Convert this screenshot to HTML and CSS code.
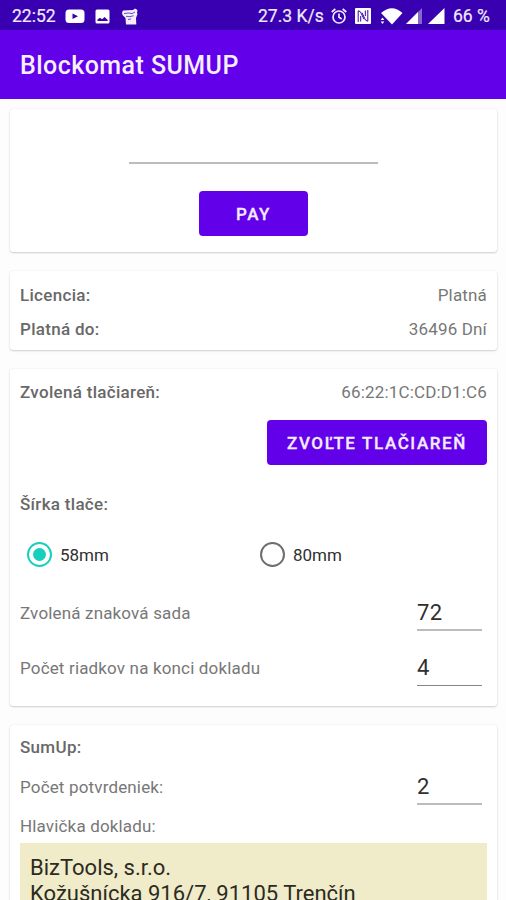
FILE: index.html
```html
<!DOCTYPE html>
<html lang="sk">
<head>
<meta charset="utf-8">
<title>Blockomat SUMUP</title>
<link rel="stylesheet" href="styles.css">
</head>
<body>
<div class="status">
  <span class="clock">22:52</span>
  <svg class="ic-video" width="20" height="15" viewBox="0 0 20 15"><rect x=".5" y=".5" width="19" height="13.5" rx="3.5" fill="#fff"/><path d="M7.5 4.5 13 7.2 7.5 10z" fill="#3800b0"/></svg>
  <svg class="ic-photo" width="15" height="15" viewBox="0 0 15 15"><rect x=".5" y=".5" width="14" height="14" rx="1.5" fill="#fff"/><path d="M2.500 12V10.500L5 8.700l2 1.600L9.700 8l3 3v1z" fill="#3800b0"/></svg>
  <svg class="ic-bin" width="18" height="17" viewBox="0 0 18 17"><path d="M1 4.500 2 2.500l10-.5L14 .5l2.500 1.500-.5 3 .5 1-1.500 4 .3 6.500H5L4.500 10 1.500 7z" fill="#fff" opacity=".93"/><path d="M3 5.500l5-.5 3 .6 3-1.600M5 8.300l4 .4 3.500-1M7 11.500l3-.5" fill="none" stroke="#3800b0" stroke-width=".7"/></svg>
  <span class="speed">27.3 K/s</span>
  <svg class="ic-alarm" width="16" height="17" viewBox="0 0 16 17" fill="none" stroke="#f1eaff" stroke-width="1.700"><circle cx="8" cy="9" r="6"/><path d="M.7 4 4.300 1M15.300 4 11.700 1M8 5.500V9.300l2.700 1.700"/></svg>
  <svg class="ic-nfc" width="16" height="16" viewBox="0 0 16 16"><rect width="16" height="16" rx="1" fill="#fff"/><path d="M3.200 14V2.800q2.300.2 3 2.500l2.800 6M12.800 2v11.200q-2.300-.2-3-2.500l-2.800-6M5.700 8v5.500M10.300 2.500V8" fill="none" stroke="#3800b0" stroke-width="1"/></svg>
  <svg class="ic-wifi" width="23" height="17" viewBox="0 0 23 17"><path d="M1 5Q12-4.500 22.500 5L12 16.500z" fill="#fff"/><path d="M0 9h4.500v8H0z" fill="#3800b0"/><path d="M2.500 9.500 4.300 12H.7zM2.500 16 4.300 13.500H.7z" fill="#fff"/></svg>
  <svg class="ic-sig1" width="17" height="16" viewBox="0 0 17 16"><path d="M0 16 16 0V16z" fill="#fff" opacity=".4"/><path d="M0 16 12 4V16z" fill="#fff"/></svg>
  <svg class="ic-sig2" width="17" height="16" viewBox="0 0 17 16"><path d="M0 16 16.500 0V16z" fill="#fff"/></svg>
  <span class="battery">66 %</span>
</div>
<header class="appbar"><h1>Blockomat SUMUP</h1></header>
<main>
  <section class="card pay-card">
    <div class="amount"></div>
    <button class="btn pay">PAY</button>
  </section>
  <section class="card license">
    <div class="row"><b>Licencia:</b><span>Platná</span></div>
    <div class="row"><b>Platná do:</b><span>36496 Dní</span></div>
  </section>
  <section class="card printer">
    <div class="row"><b>Zvolená tlačiareň:</b><span>66:22:1C:CD:D1:C6</span></div>
    <button class="btn choose">ZVOĽTE TLAČIAREŇ</button>
    <div class="row width-label"><b>Šírka tlače:</b></div>
    <div class="radios">
      <label><i class="radio on"></i><span>58mm</span></label>
      <label><i class="radio"></i><span>80mm</span></label>
    </div>
    <div class="field"><span>Zvolená znaková sada</span><div class="num">72</div></div>
    <div class="field"><span>Počet riadkov na konci dokladu</span><div class="num thin">4</div></div>
  </section>
  <section class="card sumup">
    <div class="row"><b>SumUp:</b></div>
    <div class="field short"><span>Počet potvrdeniek:</span><div class="num">2</div></div>
    <div class="row"><span>Hlavička dokladu:</span></div>
    <div class="header-text"><div>BizTools, s.r.o.</div><div>Kožušnícka 916/7, 91105 Trenčín</div></div>
  </section>
</main>
</body>
</html>
```
FILE: styles.css
```css
* { box-sizing: border-box; }
html, body { height: 900px; overflow: hidden; }
body {
  margin: 0;
  background: #fdfdfd;
  color: #777;
  font: 17px/20px Roboto, sans-serif;
  display: flex;
  flex-direction: column;
}
.status {
  flex: none;
  height: 30px;
  padding: 2px 0 0 12px;
  display: flex;
  align-items: center;
  background: #3800b0;
  color: #f1eaff;
  font-size: 17.500px;
  white-space: nowrap;
  -webkit-text-stroke: .2px #f1eaff;
}
.status svg { flex: none; }
.clock { width: 53px; }
.ic-photo { margin-left: 10px; }
.ic-bin { margin-left: 11px; }
.speed { margin-left: 119px; width: 73px; }
.ic-nfc { margin-left: 8px; }
.ic-wifi { margin-left: 9px; }
.ic-sig1 { margin-left: 3px; }
.ic-sig2 { margin-left: 5px; }
.battery { margin-left: 8px; }
.appbar {
  flex: none;
  height: 69px;
  padding: 3px 20px 0;
  display: flex;
  align-items: center;
  background: #6200ea;
  color: #f6efff;
}
h1 { margin: 0; font-size: 25px; line-height: 30px; font-weight: 500; letter-spacing: .45px; white-space: nowrap; }
main { display: flex; flex-direction: column; gap: 19px; padding: 10px 9px 0 10px; }
.card {
  flex: none;
  padding: 0 10px;
  border-radius: 3px;
  background: #fff;
  box-shadow: 0 1px 2px rgba(0, 0, 0, .17), 0 0 2px rgba(0, 0, 0, .08);
  display: flex;
  flex-direction: column;
}
.pay-card { height: 143px; align-items: center; }
.amount { width: 249px; height: 55px; border-bottom: 2px solid #bcbcbc; }
.btn {
  border: 0;
  padding: 0;
  border-radius: 4px;
  background: #6200ea;
  color: #f4ebff;
  font: 500 17px/20px Roboto, sans-serif;
  letter-spacing: 1.600px;
  -webkit-text-stroke: .3px #f4ebff;
}
.pay { width: 109px; height: 45px; margin-top: 27px; }
.license { height: 79px; padding-top: 7px; }
.row { height: 34px; display: flex; align-items: center; justify-content: space-between; white-space: nowrap; }
.row span, .field > span { letter-spacing: .16px; }
b { font-weight: 500; color: #686868; letter-spacing: .3px; }
.printer { height: 337px; padding-top: 6px; }
.choose { align-self: flex-end; width: 220px; height: 45px; margin-top: 11px; }
.width-label { margin-top: 22px; }
.radios {
  height: 51px;
  margin-top: 8px;
  display: grid;
  grid-template-columns: 233px 1fr;
  padding-left: 7px;
  color: #303030;
}
.radios label { display: flex; align-items: center; gap: 8px; }
.radio {
  width: 25px;
  height: 25px;
  border: 2.500px solid #6e6e6e;
  border-radius: 50%;
  display: grid;
  place-items: center;
}
.radio.on { border-color: #16cfbd; }
.radio.on::after { content: ""; width: 13px; height: 13px; border-radius: 50%; background: #16cfbd; }
.field {
  height: 55px;
  padding-right: 5px;
  display: flex;
  align-items: center;
  justify-content: space-between;
  white-space: nowrap;
}
.radios + .field { margin-top: 5px; }
.num { width: 65px; height: 36px; border-bottom: 2px solid #bcbcbc; color: #303030; font-size: 22px; line-height: 36px; letter-spacing: .3px; }
.num.thin { border-bottom: 1px solid #858585; }
.sumup { height: 220px; padding-top: 5px; }
.field.short { height: 45px; }
.header-text { height: 100px; padding: 12px 10px; background: #f0ecca; color: #2c2b22; font-size: 22px; line-height: 26px; white-space: nowrap; }
```
